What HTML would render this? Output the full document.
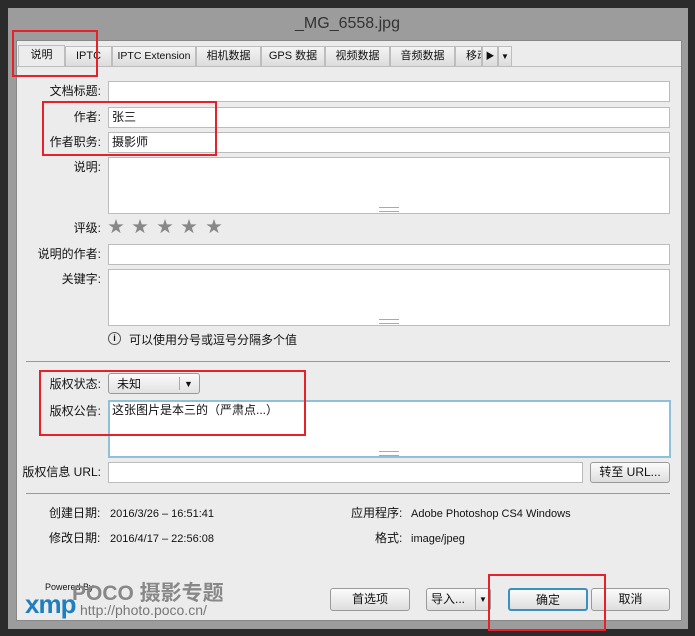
<html><head><style>
body{margin:0;width:695px;height:636px;background:#2b2b2b;font-family:"Liberation Sans","Noto Sans CJK SC",sans-serif;font-size:12px;line-height:14px;color:#111;position:relative;overflow:hidden}
.a{position:absolute}
.f{position:absolute;background:#fff;border:1px solid #bcbcbc;box-sizing:border-box;padding:2px 3px;font-size:12px}
.l{position:absolute;right:594px;text-align:right;white-space:nowrap}
.tab{position:absolute;top:46px;height:20px;border:1px solid #bdbdbd;border-bottom:none;background:linear-gradient(#f4f4f4,#dcdcdc);box-sizing:border-box;text-align:center;line-height:19px;font-size:11px;white-space:nowrap}
.btn{position:absolute;top:588px;height:23px;border:1px solid #9a9a9a;border-radius:3px;background:linear-gradient(#fbfbfb,#dedede);box-sizing:border-box;text-align:center;line-height:21px}
.red{position:absolute;border:2px solid #e8202a;box-sizing:border-box}
.grip{position:absolute;left:379px;width:20px;height:3px;border-top:1px solid #aaa;border-bottom:1px solid #aaa}
.st{position:absolute;top:219px;font-size:16px;line-height:18px;color:#888}
</style></head><body>
<div class="a" style="left:8px;top:8px;width:680px;height:621px;background:#9c9c9c"></div>
<div class="a" style="left:0;top:14px;width:695px;text-align:center;font-size:16px;line-height:20px;color:#333">_MG_6558.jpg</div>
<div class="a" style="left:16px;top:40px;width:666px;height:581px;background:#ececec;border:1px solid #888;box-sizing:border-box"></div>
<div class="tab" style="left:18px;width:47px;height:22px;top:45px;background:#ececec">说明</div>
<div class="tab" style="left:65px;width:47px">IPTC</div>
<div class="tab" style="left:112px;width:84px;font-size:10.5px">IPTC Extension</div>
<div class="tab" style="left:196px;width:65px">相机数据</div>
<div class="tab" style="left:261px;width:64px">GPS 数据</div>
<div class="tab" style="left:325px;width:65px">视频数据</div>
<div class="tab" style="left:390px;width:65px">音频数据</div>
<div class="tab" style="left:455px;width:27px;overflow:hidden;text-align:left;padding-left:10px">移动</div>
<div class="tab" style="left:482px;width:16px;font-size:9px">▶</div>
<div class="tab" style="left:498px;width:14px;font-size:8px">▼</div>
<div class="a" style="left:17px;top:66px;width:664px;height:1px;background:#bdbdbd"></div>
<div class="l" style="top:84px">文档标题:</div><div class="f" style="left:108px;top:81px;width:562px;height:21px"></div>
<div class="l" style="top:110px">作者:</div><div class="f" style="left:108px;top:107px;width:562px;height:21px">张三</div>
<div class="l" style="top:135px">作者职务:</div><div class="f" style="left:108px;top:132px;width:562px;height:21px">摄影师</div>
<div class="l" style="top:160px">说明:</div><div class="f" style="left:108px;top:157px;width:562px;height:57px"></div><div class="grip" style="top:207px"></div>
<div class="l" style="top:221px">评级:</div>
<div class="st" style="left:108px">★</div><div class="st" style="left:132px">★</div><div class="st" style="left:157px">★</div><div class="st" style="left:181px">★</div><div class="st" style="left:206px">★</div>
<div class="l" style="top:247px">说明的作者:</div><div class="f" style="left:108px;top:244px;width:562px;height:21px"></div>
<div class="l" style="top:272px">关键字:</div><div class="f" style="left:108px;top:269px;width:562px;height:57px"></div><div class="grip" style="top:319px"></div>
<div class="a" style="left:108px;top:332px;width:13px;height:13px;border:1px solid #555;border-radius:50%;box-sizing:border-box;font-size:9px;text-align:center;line-height:11px;font-weight:bold">i</div>
<div class="a" style="left:129px;top:333px">可以使用分号或逗号分隔多个值</div>
<div class="a" style="left:26px;top:361px;width:644px;height:1px;background:#999"></div>
<div class="l" style="top:377px">版权状态:</div>
<div class="a" style="left:108px;top:373px;width:92px;height:21px;border:1px solid #999;border-radius:3px;background:linear-gradient(#fafafa,#e2e2e2);box-sizing:border-box;padding:3px 8px">未知<span style="position:absolute;left:70px;top:3px;height:13px;border-left:1px solid #aaa"></span><span style="position:absolute;left:75px;top:3px;font-size:9px">▼</span></div>
<div class="l" style="top:404px">版权公告:</div><div class="f" style="left:108px;top:400px;width:563px;height:58px;border:2px solid #8fc0db;padding:1px 2px">这张图片是本三的（严肃点...）</div><div class="grip" style="top:451px"></div>
<div class="l" style="top:465px">版权信息 URL:</div><div class="f" style="left:108px;top:462px;width:475px;height:21px"></div>
<div class="btn" style="left:590px;top:462px;width:80px;height:21px;line-height:19px">转至 URL...</div>
<div class="a" style="left:26px;top:493px;width:644px;height:1px;background:#999"></div>
<div class="a" style="left:49px;top:506px">创建日期:</div><div class="a" style="left:110px;top:507px;font-size:11px">2016/3/26 – 16:51:41</div>
<div class="a" style="left:49px;top:531px">修改日期:</div><div class="a" style="left:110px;top:532px;font-size:11px">2016/4/17 – 22:56:08</div>
<div class="a" style="left:351px;top:506px">应用程序:</div><div class="a" style="left:411px;top:507px;font-size:11px">Adobe Photoshop CS4 Windows</div>
<div class="a" style="left:375px;top:531px">格式:</div><div class="a" style="left:411px;top:532px;font-size:11px">image/jpeg</div>
<div class="a" style="left:45px;top:582px;font-size:9px;line-height:10px">Powered By</div>
<div class="a" style="left:25px;top:590px;font-size:26px;line-height:28px;font-weight:bold;color:#1e7fc0;letter-spacing:-1px">xmp</div>
<div class="a" style="left:72px;top:582px;font-size:21px;line-height:24px;font-weight:bold;color:#888">POCO 摄影专题</div>
<div class="a" style="left:80px;top:602px;font-size:14px;line-height:16px;color:#777">http://photo.poco.cn/</div>
<div class="btn" style="left:330px;width:80px">首选项</div>
<div class="btn" style="left:426px;width:65px;text-align:left;padding-left:4px">导入...<span style="position:absolute;left:48px;top:0;height:21px;border-left:1px solid #aaa"></span><span style="position:absolute;left:52px;font-size:8px">▼</span></div>
<div class="btn" style="left:508px;width:80px;border:2px solid #3d8fc0">确定</div>
<div class="btn" style="left:591px;width:79px">取消</div>
<div class="red" style="left:12px;top:30px;width:86px;height:47px"></div>
<div class="red" style="left:42px;top:101px;width:175px;height:55px"></div>
<div class="red" style="left:39px;top:370px;width:267px;height:66px"></div>
<div class="red" style="left:488px;top:574px;width:118px;height:57px"></div>
</body></html>
